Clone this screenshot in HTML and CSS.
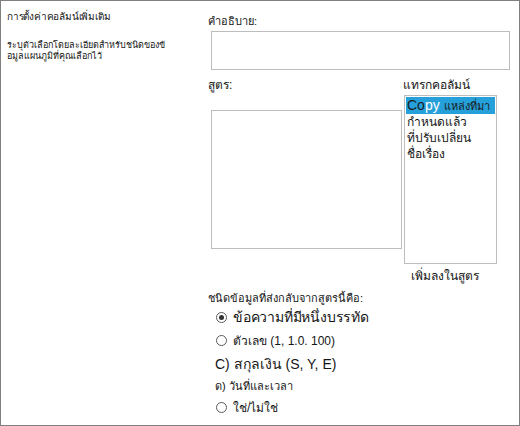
FILE: index.html
```html
<!DOCTYPE html>
<html lang="th">
<head>
<meta charset="utf-8">
<link rel="stylesheet" href="styles.css">
</head>
<body>
<div class="frame">
  <div class="left">
    <div class="heading">การตั้งค่าคอลัมน์เพิ่มเติม</div>
    <div class="desc">ระบุตัวเลือกโดยละเอียดสำหรับชนิดของข้<br>อมูลแผนภูมิที่คุณเลือกไว้</div>
  </div>
  <div class="right">
    <div class="label label-desc">คำอธิบาย:</div>
    <div class="box desc-box"></div>
    <div class="formula-row">
      <div class="formula-col">
        <div class="label">สูตร:</div>
        <div class="box formula-box"></div>
      </div>
      <div class="list-col">
        <div class="label">แทรกคอลัมน์</div>
        <div class="listbox">
          <div class="item selected"><span class="dark">Co</span>py <span class="dark thai">แหล่งที่มา</span></div>
          <div class="item">กำหนดแล้ว</div>
          <div class="item">ที่ปรับเปลี่ยน</div>
          <div class="item">ชื่อเรื่อง</div>
        </div>
        <div class="add">เพิ่มลงในสูตร</div>
      </div>
    </div>
    <div class="type-label">ชนิดข้อมูลที่ส่งกลับจากสูตรนี้คือ:</div>
    <div class="opt opt-big"><span class="radio checked"></span>ข้อความที่มีหนึ่งบรรทัด</div>
    <div class="opt opt-mid"><span class="radio"></span>ตัวเลข (1, 1.0. 100)</div>
    <div class="opt opt-plain">C) สกุลเงิน (S, Y, E)</div>
    <div class="opt opt-small">ด) วันที่และเวลา</div>
    <div class="opt opt-mid"><span class="radio"></span>ใช่/ไม่ใช่</div>
  </div>
</div>
</body>
</html>
```

FILE: styles.css
```css
html, body {
  margin: 0;
  padding: 0;
  background: #ffffff;
}

.frame {
  width: 520px;
  height: 426px;
  box-sizing: border-box;
  border: 1px solid #808080;
  display: flex;
  font-family: "Liberation Sans", Tahoma, "DejaVu Sans", sans-serif;
  color: #151515;
  overflow: hidden;
}

.left {
  width: 200px;
  flex: none;
  box-sizing: border-box;
  padding: 9px 0 0 6px;
}

.heading {
  font-size: 10px;
  line-height: 14px;
  letter-spacing: -0.2px;
}

.desc {
  margin-top: 16px;
  font-size: 9px;
  line-height: 11px;
}

.right {
  flex: 1;
  padding: 12px 0 0 7px;
}

.label {
  font-size: 12px;
  line-height: 16px;
}

.label-desc {
  font-size: 11px;
}

.box {
  border: 1px solid #bdbdbd;
  box-sizing: border-box;
  background: #ffffff;
}

.desc-box {
  margin: 2px 0 0 3px;
  width: 299px;
  height: 39px;
}

.formula-row {
  display: flex;
  margin-top: 7px;
}

.formula-col {
  width: 195px;
  flex: none;
}

.formula-box {
  margin: 17px 0 0 3px;
  width: 191px;
  height: 139px;
}

.list-col {
  width: 100px;
}

.listbox {
  margin: 2px 0 0 1px;
  width: 93px;
  height: 169px;
  box-sizing: border-box;
  border: 1px solid #bdbdbd;
  padding: 1px;
}

.item {
  font-size: 12px;
  line-height: 16px;
  height: 16px;
  padding-left: 1px;
  white-space: nowrap;
}

.item.selected {
  background: #26a0da;
  color: #ffffff;
  height: 17px;
  line-height: 17px;
  font-size: 14px;
}

.item.selected .dark {
  color: #1a1a1a;
}

.item.selected .thai {
  font-size: 11px;
}

.add {
  margin: 4px 0 0 8px;
  font-size: 12px;
  line-height: 16px;
}

.type-label {
  margin-top: 7px;
  font-size: 11px;
  line-height: 14px;
}

.opt {
  display: flex;
  align-items: center;
  padding-left: 8px;
  white-space: nowrap;
}

.opt-big {
  font-size: 14px;
  height: 24px;
  letter-spacing: -0.2px;
}

.opt-mid {
  font-size: 12px;
  height: 23px;
}

.opt-plain {
  font-size: 14px;
  height: 24px;
  padding-left: 7px;
}

.opt-small {
  font-size: 11px;
  height: 20px;
  padding-left: 7px;
}

.radio {
  width: 11px;
  height: 11px;
  box-sizing: border-box;
  border: 1px solid #5a5a5a;
  border-radius: 50%;
  margin-right: 6px;
  display: flex;
  align-items: center;
  justify-content: center;
  flex: none;
}

.radio.checked::after {
  content: "";
  width: 5px;
  height: 5px;
  border-radius: 50%;
  background: #333333;
}
```
